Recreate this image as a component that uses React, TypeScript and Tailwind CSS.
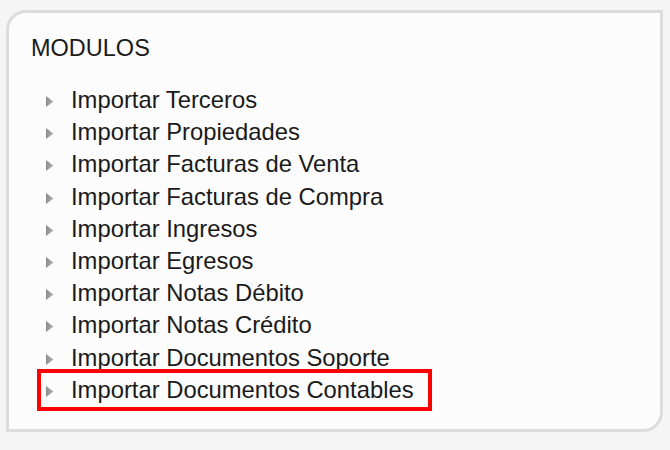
import React from 'react';

const modulos = [
  'Importar Terceros',
  'Importar Propiedades',
  'Importar Facturas de Venta',
  'Importar Facturas de Compra',
  'Importar Ingresos',
  'Importar Egresos',
  'Importar Notas Débito',
  'Importar Notas Crédito',
  'Importar Documentos Soporte',
  'Importar Documentos Contables',
];

function Arrow() {
  return (
    <svg width="8" height="11" viewBox="0 0 8 11" className="shrink-0 mt-[3px]">
      <defs>
        <linearGradient id="arr" x1="0" y1="0" x2="1" y2="0">
          <stop offset="0" stopColor="#8c8c8c" />
          <stop offset="1" stopColor="#b4b4b4" />
        </linearGradient>
      </defs>
      <polygon points="0,0 7.5,5.5 0,11" fill="url(#arr)" />
    </svg>
  );
}

export default function App() {
  return (
    <div className="w-[670px] h-[450px] bg-[#f5f5f5] pt-[10px] pl-[6px] font-['Liberation_Sans',Arial,sans-serif] text-[#1a1a1a]">
      <div className="w-[657px] h-[422px] bg-[#fcfcfc] border-[3px] border-[#dcdcdc] rounded-tl-[20px] rounded-br-[20px] pt-[19px] pl-[22px]">
        <h2 className="text-[23.5px] leading-[32px]">MODULOS</h2>
        <ul className="mt-[20px] ml-[11px]">
          {modulos.map((m, i) => (
            <li
              key={m}
              className={`flex items-center h-[32.2px] pl-[4px] w-fit pr-[13px] ${
                i === modulos.length - 1 ? 'outline-4 outline-[#ff0000] outline-offset-[1px]' : ''
              }`}
            >
              <Arrow />
              <span className="ml-[17px] text-[23.8px] leading-[32px]">{m}</span>
            </li>
          ))}
        </ul>
      </div>
    </div>
  );
}
